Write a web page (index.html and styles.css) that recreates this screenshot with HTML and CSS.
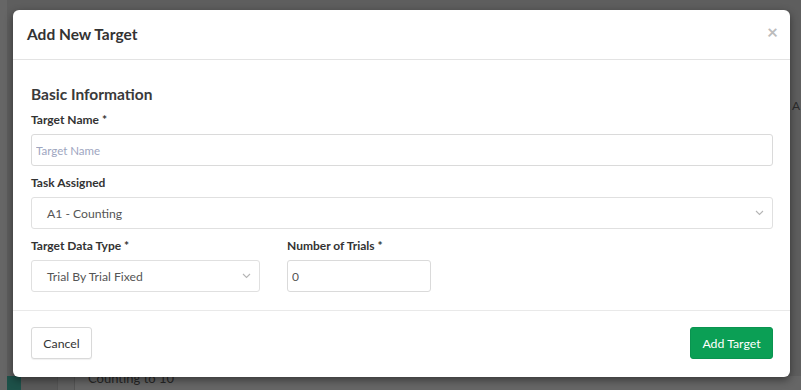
FILE: index.html
```html
<!DOCTYPE html>
<html lang="en">
<head>
    <meta charset="UTF-8">
    <meta name="viewport" content="width=device-width, initial-scale=1.0">
    <title>Add New Target</title>
    <link rel="stylesheet" href="styles.css">
</head>
<body>
    <div class="page">
        <div class="page-side">
            <span class="side-mark"></span>
        </div>
        <div class="page-main">
            <span class="page-letter">A</span>
            <div class="page-row">
                <span class="row-teal"></span>
                <span class="row-cell"></span>
                <span class="row-cell small"></span>
                <span class="row-text">Counting to 10</span>
            </div>
        </div>
    </div>

    <div class="modal">
        <div class="modal-header">
            <h4>Add New Target</h4>
            <span class="close">&times;</span>
        </div>

        <div class="modal-body">
            <h3>Basic Information</h3>

            <div class="field">
                <label>Target Name *</label>
                <input class="input" type="text" placeholder="Target Name">
            </div>

            <div class="field">
                <label>Task Assigned</label>
                <div class="select">
                    <span>A1 - Counting</span>
                    <svg width="9" height="6" viewBox="0 0 9 6"><path d="M1 1l3.5 3.5L8 1" fill="none" stroke="#b5b5b5" stroke-width="1.1"/></svg>
                </div>
            </div>

            <div class="field-row">
                <div class="field type">
                    <label>Target Data Type *</label>
                    <div class="select">
                        <span>Trial By Trial Fixed</span>
                        <svg width="9" height="6" viewBox="0 0 9 6"><path d="M1 1l3.5 3.5L8 1" fill="none" stroke="#b5b5b5" stroke-width="1.1"/></svg>
                    </div>
                </div>
                <div class="field trials">
                    <label>Number of Trials *</label>
                    <input class="input number" type="text" value="0">
                </div>
            </div>
        </div>

        <div class="modal-footer">
            <button class="btn btn-default">Cancel</button>
            <button class="btn btn-success">Add Target</button>
        </div>
    </div>
</body>
</html>
```

FILE: styles.css
```css
* {
    box-sizing: border-box;
}

body {
    margin: 0;
    width: 801px;
    height: 390px;
    overflow: hidden;
    background-color: #616161;
    font-family: 'Lato', 'Open Sans', sans-serif;
    color: #333;
}

/* page behind the overlay */

.page {
    display: flex;
    height: 390px;
}

.page-side {
    width: 7px;
    background-color: #666;
    position: relative;
}

.side-mark {
    position: absolute;
    left: 7px;
    top: 25px;
    width: 2px;
    height: 20px;
    background-color: #262626;
}

.page-main {
    flex: 1;
    display: flex;
    flex-direction: column;
    justify-content: flex-end;
    position: relative;
    background-color: #5e5e5e;
}

.page-letter {
    position: absolute;
    right: 1px;
    top: 99px;
    font-size: 12px;
    line-height: 14px;
    color: #2b2b2b;
}

.page-row {
    display: flex;
    height: 14px;
    background-color: #666;
}

.row-teal {
    width: 14px;
    background-color: #1d5149;
}

.row-cell {
    width: 37px;
    background-color: #5a5a5a;
    border-right: 1px solid #555;
}

.row-cell.small {
    width: 17px;
    background-color: #616161;
}

.row-text {
    margin-left: 13px;
    margin-top: -6px;
    font-size: 13px;
    line-height: 16px;
    color: #262626;
}

/* modal */

.modal {
    position: absolute;
    left: 13px;
    top: 10px;
    width: 777px;
    height: 367px;
    background-color: #fff;
    border-radius: 6px;
    box-shadow: 0 3px 9px rgba(0, 0, 0, 0.45);
    display: flex;
    flex-direction: column;
}

.modal-header {
    display: flex;
    justify-content: space-between;
    align-items: center;
    height: 50px;
    padding: 0 12px 2px 14px;
    border-bottom: 1px solid #e3e3e3;
}

.modal-header h4 {
    margin: 0;
    font-size: 15.5px;
    font-weight: 700;
    color: #333;
}

.close {
    font-size: 19px;
    font-weight: 700;
    color: #bcbcbc;
    line-height: 1;
    margin-top: -5px;
}

.modal-body {
    padding: 24px 17px 18px 18px;
    border-bottom: 1px solid #e9e9e9;
}

.modal-body h3 {
    margin: 0 0 7px 0;
    font-size: 15.5px;
    line-height: 20px;
    font-weight: 700;
    color: #3a3a3a;
}

.field {
    margin-bottom: 8px;
}

.field label {
    display: block;
    font-size: 12px;
    line-height: 18px;
    font-weight: 700;
    color: #333;
    margin-bottom: 5px;
}

.input {
    display: block;
    width: 100%;
    height: 32px;
    padding: 0 4px;
    border: 1px solid #dadada;
    border-radius: 3px;
    font-family: 'Lato', 'Open Sans', sans-serif;
    font-size: 11.5px;
    color: #555;
    outline: none;
}

.input::placeholder {
    color: #9ea6bf;
}

.input.number {
    font-size: 12px;
}

.select {
    display: flex;
    align-items: center;
    justify-content: space-between;
    height: 32px;
    padding: 0 8px 0 15px;
    border: 1px solid #e0e0e0;
    border-radius: 3px;
    font-size: 12.2px;
    color: #555;
}

.field-row {
    display: flex;
    gap: 27px;
}

.field-row .field {
    margin-bottom: 0;
}

.field.type {
    width: 229px;
}

.field.trials {
    width: 144px;
}

.modal-footer {
    display: flex;
    justify-content: space-between;
    padding: 16px 17px 17px 18px;
}

.btn {
    height: 32px;
    border-radius: 3px;
    font-family: 'Lato', 'Open Sans', sans-serif;
    font-size: 12.3px;
    padding: 0;
    white-space: nowrap;
    cursor: pointer;
}

.btn-default {
    width: 61px;
    background-color: #fff;
    border: 1px solid #d9d9d9;
    color: #333;
    box-shadow: 0 1px 1px rgba(0, 0, 0, 0.06);
}

.btn-success {
    width: 83px;
    background-color: #0b9f55;
    border: 1px solid #0a9450;
    color: #fff;
}
```
